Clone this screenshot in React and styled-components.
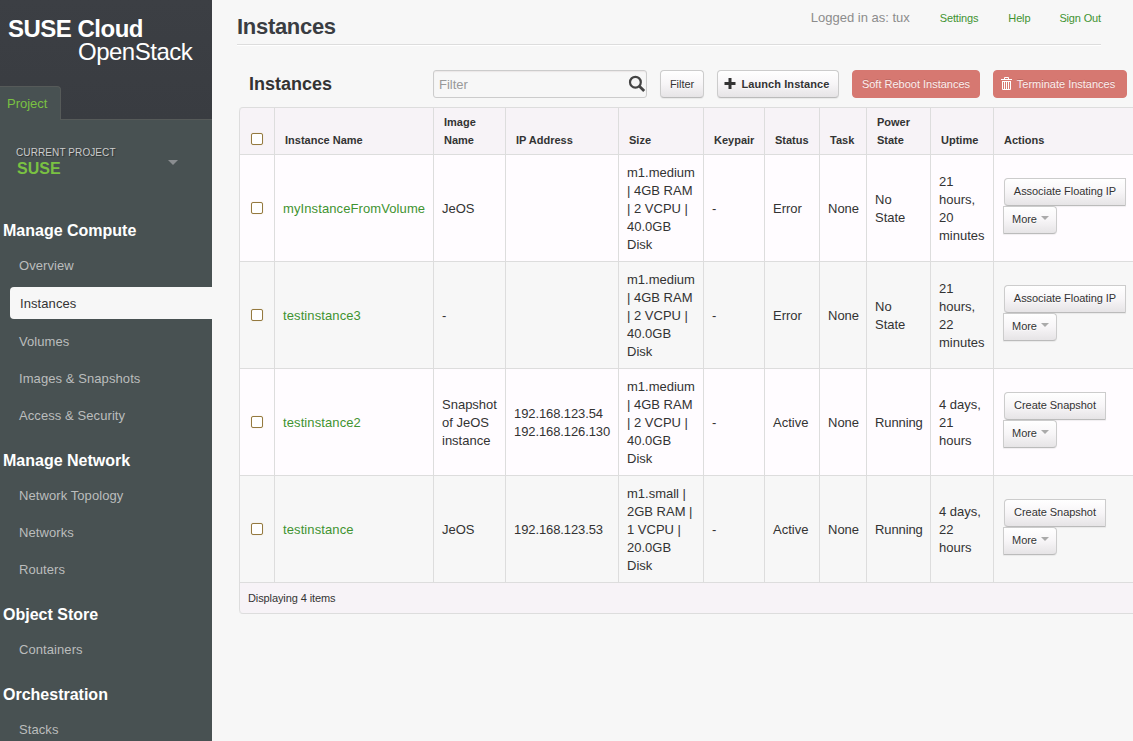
import React from 'react';
import styled, { createGlobalStyle, css } from 'styled-components';

const Global = createGlobalStyle`
  *, *::before, *::after { box-sizing: border-box; }
  html, body { margin: 0; height: 741px; overflow: hidden; background: #f7f7f7; }
  body { font: 13px/18px "Liberation Sans", Arial, sans-serif; color: #333; }
  ul { list-style: none; margin: 0; padding: 0; }
  h1, h2, h3, h4, p { margin: 0; }
  a { color: inherit; text-decoration: none; }
  button, input { font-family: inherit; }
`;

const Page = styled.div`
  display: flex;
  width: 1133px;
  height: 741px;
  overflow: hidden;
`;

const Sidebar = styled.aside`
  flex: 0 0 212px;
  height: 741px;
  overflow: hidden;
  background: #485152;
`;

const Brand = styled.header`
  height: 120px;
  background: linear-gradient(#3c3f44, #393c41);
  border-bottom: 1px solid #565a59;
  display: flex;
  flex-direction: column;
  justify-content: space-between;
`;

const Logo = styled.h1`
  padding: 17px 0 0 8px;
  color: #fff;
  font-size: 24px;
  line-height: 23px;
  letter-spacing: -0.5px;
  white-space: nowrap;
  span {
    display: block;
    padding-left: 70px;
    font-weight: 400;
    letter-spacing: -0.5px;
  }
`;

const ProjectTab = styled.a`
  width: 61px;
  height: 34px;
  margin-bottom: -1px;
  padding: 8px 0 0 7px;
  color: #7ac142;
  background: #485152;
  border: 1px solid #565a59;
  border-width: 1px 1px 0 0;
  border-radius: 0 4px 0 0;
`;

const ProjectPicker = styled.div`
  height: 93px;
  padding: 27px 34px 0 16px;
  display: flex;
  justify-content: space-between;
`;

const PickerLabel = styled.h4`
  color: #ccc;
  font-size: 10px;
  font-weight: 400;
  line-height: 12px;
  letter-spacing: 0.1px;
  text-shadow: 1px 1px 1px rgba(0, 0, 0, 0.4);
`;

const PickerValue = styled.h3`
  padding: 1px 0 0 1px;
  color: #7ac142;
  font-size: 16px;
  line-height: 18px;
`;

const Caret = styled.i`
  display: inline-block;
  border: solid transparent;
  border-width: ${p => p.$size}px ${p => p.$size}px 0;
  border-top-color: ${p => p.$color};
`;

const PickerCaret = styled(Caret)`
  align-self: flex-start;
  margin-top: 13px;
`;

const NavTitle = styled.h4`
  height: 34px;
  padding-left: 3px;
  color: #fff;
  font-size: 16px;
  line-height: 36px;
`;

const NavGroup = styled.ul`
  margin-bottom: 9px;
`;

const NavItem = styled.li`
  height: 37px;
  padding-left: 19px;
  color: #bbbdbd;
  line-height: 37px;
  letter-spacing: 0.08px;
  ${p => p.$active && css`
    height: 32px;
    margin: 3px 0 4px 10px;
    padding-left: 10px;
    color: #333;
    line-height: 33px;
    background: #f7f7f7;
    border-radius: 4px 0 0 4px;
  `}
`;

const Main = styled.main`
  flex: 1;
  min-width: 0;
  overflow: hidden;
  padding-left: 25px;
`;

const PageHeader = styled.header`
  width: 864px;
  height: 45px;
  border-bottom: 1px solid #ddd;
  box-shadow: 0 1px 0 #fff;
  display: flex;
  justify-content: space-between;
`;

const PageTitle = styled.h2`
  padding-top: 14px;
  color: #3a3d42;
  font-size: 22px;
  line-height: 26px;
  letter-spacing: -0.3px;
`;

const UserInfo = styled.div`
  display: flex;
  padding-top: 9px;
  color: #8c8c8c;
`;

const UserLink = styled.a`
  margin-left: ${p => p.$gap}px;
  color: #3f9331;
  font-size: 11px;
  letter-spacing: -0.15px;
`;

const Toolbar = styled.div`
  display: flex;
  align-items: center;
  height: 28px;
  margin-top: 25px;
  padding-left: 12px;
`;

const TableTitle = styled.h3`
  width: 184px;
  font-size: 18px;
  line-height: 28px;
`;

const SearchField = styled.div`
  display: flex;
  align-items: center;
  width: 214px;
  height: 28px;
  margin-right: 13px;
  padding: 0 0 0 5px;
  background: #f7f7f7;
  border: 1px solid #ccc;
  border-radius: 3px;
  box-shadow: inset 0 1px 1px rgba(120, 60, 60, 0.08);
  input {
    flex: 1;
    min-width: 0;
    padding: 0;
    border: 0;
    outline: 0;
    background: none;
    font-size: 13px;
  }
  input::placeholder { color: #999; opacity: 1; }
`;

const Button = styled.button`
  display: inline-flex;
  align-items: center;
  justify-content: center;
  width: ${p => p.$w}px;
  height: 28px;
  padding: 0;
  color: #333;
  background: linear-gradient(#fff 0%, #f7f5f7 50%, #e6e4e6 100%);
  border: 1px solid #ccc;
  border-bottom-color: #bbb;
  border-radius: ${p => p.$radius || '4px'};
  box-shadow: 0 1px 1px rgba(0, 0, 0, 0.06);
  font-size: 11px;
  font-weight: ${p => (p.$bold ? 700 : 400)};
  letter-spacing: ${p => (p.$bold ? 0.08 : -0.05)}px;
  white-space: nowrap;
  text-shadow: 0 1px 1px rgba(255, 255, 255, 0.75);
  ${p => p.$bold && 'padding-right: 3px;'}
  svg { margin-right: 6px; }
`;

const DangerButton = styled(Button)`
  color: #fbeeed;
  background: #d67871;
  border-color: #d67871;
  box-shadow: none;
  text-shadow: 0 -1px 0 rgba(0, 0, 0, 0.15);
  letter-spacing: 0;
  padding-right: ${p => p.$shift || 0}px;
  svg { margin-right: 5px; }
`;

const ToolbarGap = styled.span`
  flex: 0 0 13px;
`;

const Table = styled.table`
  width: 918px;
  margin: 9px 0 0 2px;
  table-layout: fixed;
  border-collapse: separate;
  border-spacing: 0;
  border: 1px solid #ddd;
  border-left-width: 0;
  border-radius: 4px;
`;

const HeadCell = styled.th`
  height: 46px;
  padding: 0 0 5px ${p => (p.$check ? 11 : 10)}px;
  background: #f7f3f7;
  border-left: 1px solid #ddd;
  text-align: left;
  vertical-align: bottom;
  font-size: 11px;
  line-height: 18px;
  white-space: nowrap;
  &:first-child { border-top-left-radius: 4px; }
`;

const Row = styled.tr`
  background: ${p => (p.$odd ? '#fffcff' : '#f7f7f7')};
`;

const Cell = styled.td`
  height: 107px;
  padding: 1px 0 0 ${p => p.$pad ?? 8}px;
  border-top: 1px solid #ddd;
  border-left: 1px solid #ddd;
  vertical-align: middle;
  white-space: pre-line;
  letter-spacing: ${p => (p.$tight ? -0.1 : 0)}px;
`;

const Check = styled.input.attrs({ type: 'checkbox' })`
  appearance: none;
  display: block;
  width: 12px;
  height: 12px;
  margin: ${p => (p.$head ? '0 0 4px' : '0 0 2px')};
  background: #fff;
  border: 1px solid #94793f;
  border-radius: 2px;
  box-shadow: 0 0 1px rgba(200, 170, 100, 0.5);
`;

const InstanceLink = styled.a`
  color: #3f9331;
  letter-spacing: 0.1px;
`;

const Actions = styled.div`
  display: flex;
  flex-direction: column;
  align-items: flex-start;
  margin-top: -5px;
  padding-left: 2px;
  ${Button} { padding-bottom: 2px; }
  ${Button} + ${Button} { margin-left: -1px; padding-left: 1px; }
  i { margin: -3px 0 0 4px; }
`;

const FooterCell = styled.td`
  height: 31px;
  padding-left: 8px;
  background: #f7f3f7;
  border-top: 1px solid #ddd;
  border-left: 1px solid #ddd;
  border-bottom-left-radius: 4px;
  font-size: 11px;
  letter-spacing: -0.1px;
`;

const SearchIcon = () => (
  <svg width="18" height="18" viewBox="0 0 18 18" fill="none" stroke="#444">
    <circle cx="7.4" cy="7.2" r="5.4" strokeWidth="2.2" />
    <path d="M11.4 11.2 16.2 16" strokeWidth="2.8" />
  </svg>
);

const PlusIcon = () => (
  <svg width="12" height="12" viewBox="0 0 12 12" fill="#333">
    <path d="M4.5 0h3v4h4v3h-4v4h-3v-4h-4v-3h4z" />
  </svg>
);

const TrashIcon = () => (
  <svg width="11" height="14" viewBox="0 0 11 14" fill="none" stroke="#fff">
    <path d="M3.5 2V.5h4V2M0 2.5h11" />
    <path d="M1.5 4v8.5h8V4M3.5 4v9M5.5 4v9M7.5 4v9M1 4.5h9" />
  </svg>
);

const NAV = [
  ['Manage Compute', ['Overview', 'Instances', 'Volumes', 'Images & Snapshots', 'Access & Security']],
  ['Manage Network', ['Network Topology', 'Networks', 'Routers']],
  ['Object Store', ['Containers']],
  ['Orchestration', ['Stacks']],
];

const COLUMNS = [
  ['Instance Name', 159], ['Image\nName', 72], ['IP Address', 113], ['Size', 85], ['Keypair', 61],
  ['Status', 55], ['Task', 47], ['Power\nState', 64], ['Uptime', 63], ['Actions', 164],
];

const MEDIUM = 'm1.medium\n| 4GB RAM\n| 2 VCPU |\n40.0GB\nDisk';
const SMALL = 'm1.small |\n2GB RAM |\n1 VCPU |\n20.0GB\nDisk';

const ROWS = [
  { name: 'myInstanceFromVolume', cells: ['JeOS', '', MEDIUM, '-', 'Error', 'None', 'No\nState', '21\nhours,\n20\nminutes'], action: 'Associate Floating IP' },
  { name: 'testinstance3', cells: ['-', '', MEDIUM, '-', 'Error', 'None', 'No\nState', '21\nhours,\n22\nminutes'], action: 'Associate Floating IP' },
  { name: 'testinstance2', cells: ['Snapshot\nof JeOS\ninstance', '192.168.123.54\n192.168.126.130', MEDIUM, '-', 'Active', 'None', 'Running', '4 days,\n21\nhours'], action: 'Create Snapshot' },
  { name: 'testinstance', cells: ['JeOS', '192.168.123.53', SMALL, '-', 'Active', 'None', 'Running', '4 days,\n22\nhours'], action: 'Create Snapshot' },
];

const HeadText = styled.span`
  white-space: pre-line;
`;

export default function App() {
  return (
    <Page>
      <Global />
      <Sidebar>
        <Brand>
          <Logo>SUSE Cloud<span>OpenStack</span></Logo>
          <ProjectTab href="#">Project</ProjectTab>
        </Brand>
        <ProjectPicker>
          <div>
            <PickerLabel>CURRENT PROJECT</PickerLabel>
            <PickerValue>SUSE</PickerValue>
          </div>
          <PickerCaret $size={5} $color="#8a8d90" />
        </ProjectPicker>
        <nav>
          {NAV.map(([title, items]) => (
            <React.Fragment key={title}>
              <NavTitle>{title}</NavTitle>
              <NavGroup>
                {items.map(item => (
                  <NavItem key={item} $active={item === 'Instances'}>{item}</NavItem>
                ))}
              </NavGroup>
            </React.Fragment>
          ))}
        </nav>
      </Sidebar>
      <Main>
        <PageHeader>
          <PageTitle>Instances</PageTitle>
          <UserInfo>
            <span>Logged in as: tux</span>
            <UserLink $gap={30} href="#">Settings</UserLink>
            <UserLink $gap={30} href="#">Help</UserLink>
            <UserLink $gap={29} href="#">Sign Out</UserLink>
          </UserInfo>
        </PageHeader>
        <Toolbar>
          <TableTitle>Instances</TableTitle>
          <SearchField>
            <input placeholder="Filter" />
            <SearchIcon />
          </SearchField>
          <Button $w={44}>Filter</Button>
          <ToolbarGap />
          <Button $w={122} $bold><PlusIcon />Launch Instance</Button>
          <ToolbarGap />
          <DangerButton $w={128}>Soft Reboot Instances</DangerButton>
          <ToolbarGap />
          <DangerButton $w={134} $shift={4}><TrashIcon />Terminate Instances</DangerButton>
        </Toolbar>
        <Table>
          <colgroup>
            <col width={35} />
            {COLUMNS.map(([label, width]) => <col key={label} width={width} />)}
          </colgroup>
          <thead>
            <tr>
              <HeadCell $check><Check $head /></HeadCell>
              {COLUMNS.map(([label]) => (
                <HeadCell key={label}><HeadText>{label}</HeadText></HeadCell>
              ))}
            </tr>
          </thead>
          <tbody>
            {ROWS.map((row, i) => (
              <Row key={row.name} $odd={i % 2 === 0}>
                <Cell $pad={11}><Check /></Cell>
                <Cell><InstanceLink href="#">{row.name}</InstanceLink></Cell>
                {row.cells.map((text, c) => <Cell key={c} $tight={c === 1 || text === 'Running'}>{text}</Cell>)}
                <Cell>
                  <Actions>
                    <Button $w={row.action === 'Create Snapshot' ? 102 : 122} $radius="4px 0 0 4px">{row.action}</Button>
                    <Button $w={54} $radius="0 4px 4px 0">More<Caret $size={4} $color="#aaa" /></Button>
                  </Actions>
                </Cell>
              </Row>
            ))}
          </tbody>
          <tfoot>
            <tr><FooterCell colSpan={11}>Displaying 4 items</FooterCell></tr>
          </tfoot>
        </Table>
      </Main>
    </Page>
  );
}
